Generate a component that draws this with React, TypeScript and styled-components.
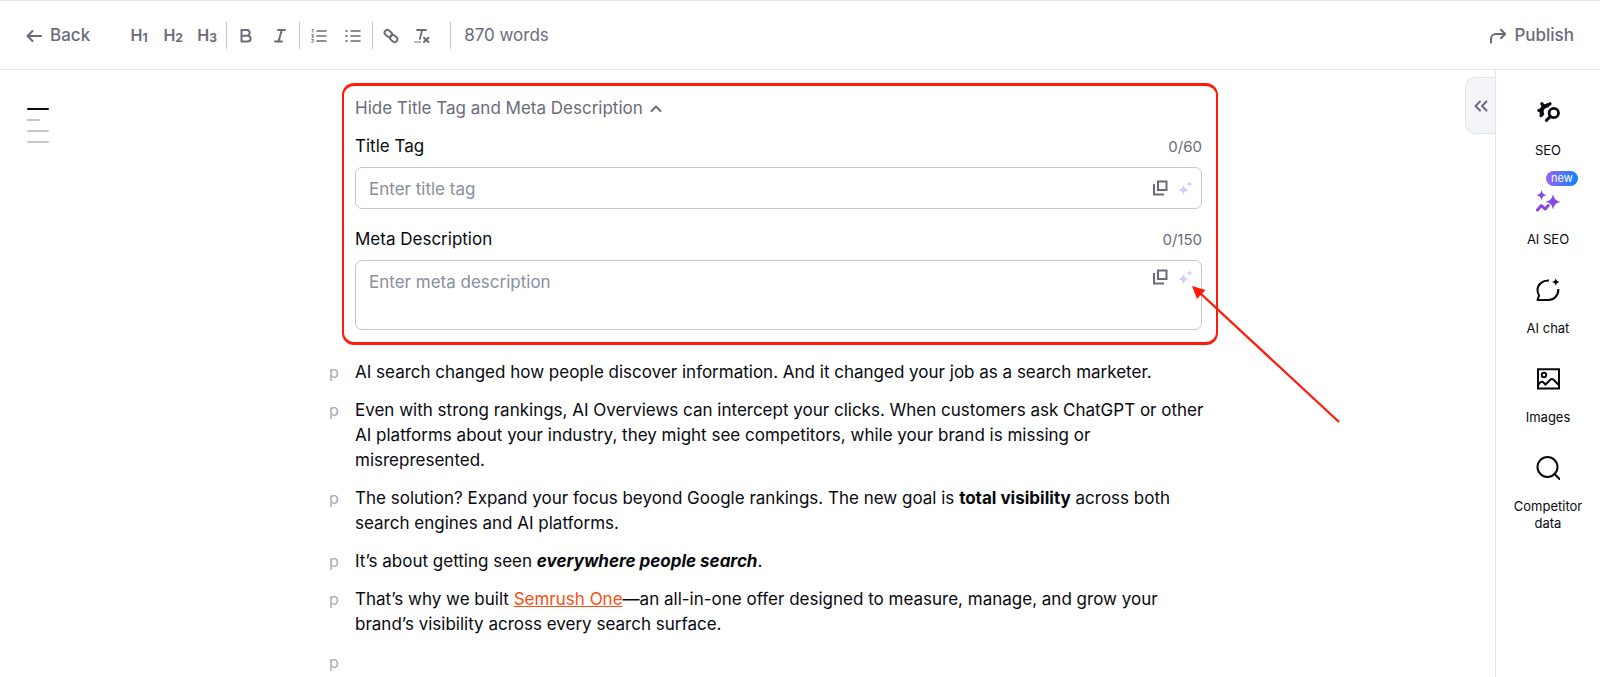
import React from "react";
import styled, { createGlobalStyle } from "styled-components";

const ink = "#08090f";
const muted = "#6a6b7a";
const line = "#e3e4ea";
const control = "#c4c6d2";
const annotation = "#ff1a0a";

const GlobalStyle = createGlobalStyle`
  * { box-sizing: border-box; }
  html, body { margin: 0; background: #fff; }
  body {
    font-family: Inter, "Liberation Sans", sans-serif;
    font-size: 17px;
    line-height: 25px;
    color: ${ink};
  }
  button, input, textarea { font: inherit; color: inherit; }
  button { border: 0; padding: 0; background: none; cursor: pointer; }
  svg { display: block; flex: none; }
`;

const Page = styled.div`
  display: flex;
  flex-direction: column;
  height: 100vh;
  overflow: hidden;
  border-top: 1px solid ${line};
`;

const Toolbar = styled.header`
  display: flex;
  align-items: center;
  flex: none;
  height: 69px;
  padding: 1px 26px 0;
  border-bottom: 1px solid ${line};
  color: ${muted};
`;

const NavButton = styled.button`
  display: flex;
  align-items: center;
  gap: 8px;
  font-weight: 500;
`;

const Tools = styled.div`
  display: flex;
  align-items: center;
  margin-left: 32px;
`;

const ToolButton = styled.button<{ $narrow?: boolean }>`
  display: flex;
  align-items: center;
  justify-content: center;
  width: ${(p) => (p.$narrow ? 31 : 34)}px;
  height: 28px;
  font-size: 16px;
  font-weight: 600;
`;

const Level = styled.span`
  padding-top: 3px;
  font-size: 12px;
  font-weight: 700;
`;

const Divider = styled.span<{ $wide?: boolean }>`
  width: 1px;
  height: 27px;
  margin: 0 ${(p) => (p.$wide ? 13 : 2)}px;
  background: ${control};
`;

const Words = styled.span`
  margin-right: auto;
`;

const Body = styled.div`
  display: flex;
  flex: 1;
  min-height: 0;
`;

const Outline = styled.nav`
  display: flex;
  flex-direction: column;
  gap: 9px;
  width: 82px;
  padding: 38px 0 0 27px;
`;

const OutlineMark = styled.a<{ $short?: boolean; $active?: boolean }>`
  width: ${(p) => (p.$short ? 13 : 22)}px;
  height: 2px;
  border-radius: 1px;
  background: ${(p) => (p.$active ? ink : control)};
`;

const Editor = styled.main`
  flex: 1;
  min-width: 0;
`;

const Article = styled.div`
  display: flex;
  flex-direction: column;
  gap: 13px;
  max-width: 889px;
  margin: 0 auto;
  padding-top: 13px;
`;

const MetaPanel = styled.section`
  position: relative;
  margin: 0 0 2px 13px;
  padding: 10px 14px 12px 11px;
  border: 2px solid ${annotation};
  border-width: 3px 2px;
  border-radius: 12px;
`;

const Toggle = styled.button`
  display: flex;
  align-items: center;
  gap: 7px;
  color: ${muted};
`;

const Field = styled.div<{ $first?: boolean }>`
  margin-top: ${(p) => (p.$first ? 13 : 18)}px;
`;

const FieldHead = styled.div`
  display: flex;
  justify-content: space-between;
  margin-bottom: 8px;
`;

const Counter = styled.span`
  font-size: 15px;
  color: ${muted};
`;

const Box = styled.div<{ $tall?: boolean }>`
  display: flex;
  align-items: ${(p) => (p.$tall ? "flex-start" : "center")};
  height: ${(p) => (p.$tall ? 70 : 42)}px;
  padding: ${(p) => (p.$tall ? 8 : 0)}px 8px 0 13px;
  border: 1px solid ${control};
  border-radius: 7px;

  input, textarea {
    flex: 1;
    min-width: 0;
    height: ${(p) => (p.$tall ? 50 : 26)}px;
    padding: 1px 0 0;
    border: 0;
    outline: 0;
    resize: none;
    background: none;
  }
  ::placeholder { color: #8a8e9e; opacity: 1; }
`;

const BoxButtons = styled.div`
  display: flex;
  gap: 9px;
  color: ${muted};
`;

const ArrowLayer = styled.svg`
  position: absolute;
  top: 199px;
  right: -127px;
  pointer-events: none;
`;

const Block = styled.div`
  display: grid;
  grid-template-columns: 26px 1fr;
  padding-right: 11px;
`;

const Tag = styled.span`
  color: #a9abb8;
  font-size: 16px;
`;

const Text = styled.p`
  margin: 0;
  min-height: 25px;
`;

const TextLink = styled.a`
  color: #ff4d12;
  text-decoration: underline;
`;

const CollapseTab = styled.button`
  display: flex;
  align-items: center;
  justify-content: center;
  width: 30px;
  height: 57px;
  margin-top: 7px;
  border: 1px solid ${line};
  border-right: 0;
  border-radius: 10px 0 0 10px;
  background: #f4f5f9;
  color: ${muted};
`;

const Sidebar = styled.aside`
  display: flex;
  flex-direction: column;
  align-items: center;
  gap: 30px;
  width: 105px;
  padding-top: 30px;
  border-left: 1px solid ${line};
`;

const SideItem = styled.button`
  position: relative;
  display: flex;
  flex-direction: column;
  align-items: center;
  gap: 18px;
  width: 80px;
  font-size: 13px;
  line-height: 17px;
`;

const Badge = styled.span`
  position: absolute;
  top: -18px;
  left: 38px;
  padding: 0 5px;
  border-radius: 8px;
  background: linear-gradient(90deg, #9b62f2, #0a86ff);
  color: #fff;
  font-size: 11px;
  line-height: 15px;
`;

const stroke = {
  fill: "none",
  stroke: "currentColor",
  strokeWidth: 2,
  strokeLinecap: "round" as const,
  strokeLinejoin: "round" as const,
};

const CopyIcon = () => (
  <svg width="16" height="16" {...stroke} strokeLinecap="butt" strokeLinejoin="miter">
    <path d="M6 1.500h8.500V10H6z" />
    <path d="M2 4v10.500h10" />
  </svg>
);

const SparkleIcon = () => (
  <svg width="16" height="16" fill="#d9c8f7">
    <path d="M6.500 5c.8 3 1.800 4 5 5-3.200 1-4.200 2-5 5-.8-3-1.800-4-5-5 3.200-1 4.200-2 5-5z" />
    <path d="M12.500 1c.4 1.900 1 2.500 3 3-2 .5-2.600 1.100-3 3-.4-1.900-1-2.500-3-3 2-.5 2.600-1.100 3-3z" />
  </svg>
);

const FieldActions = () => (
  <BoxButtons>
    <button aria-label="Copy"><CopyIcon /></button>
    <button aria-label="Generate"><SparkleIcon /></button>
  </BoxButtons>
);

const SeoIcon = () => (
  <svg width="24" height="24" {...stroke}>
    <path d="M12.500 5.300C8.500 5.500 5.500 8 5.500 11.500c0 1.500.3 2.500 1 3.700" strokeWidth="4.200" strokeLinecap="butt" />
    <path d="M5.800 3.800l1.500 2M11.800 5l2.200-1.200M2.800 10.300h2M5 15.600l1.500-1.500" strokeWidth="3.200" />
    <circle cx="17.800" cy="13" r="4.700" strokeWidth="2.800" />
    <path d="M14.200 16.600L10.400 20.400" strokeWidth="3" />
  </svg>
);

const AiSeoIcon = () => (
  <svg width="24" height="24" fill="#8649e1">
    <path d="M5.500 1c.9 3.500 1.800 4.300 5 5.200-3.200.9-4.100 1.700-5 5.200-.9-3.500-1.800-4.300-5-5.200 3.200-.9 4.100-1.700 5-5.200z" />
    <path d="M17 5c1.200 5 2.600 6.500 7.500 7.800-4.900 1.300-6.300 2.700-7.500 7.700-1.200-5-2.600-6.400-7.500-7.700 4.900-1.300 6.300-2.800 7.500-7.800z" />
    <path d="M1.500 21l3.800-4.400 4 3.400 3-3.400" fill="none" stroke="#8649e1" strokeWidth="3" strokeLinecap="round" strokeLinejoin="round" />
  </svg>
);

const ChatIcon = () => (
  <svg width="24" height="24" {...stroke}>
    <path d="M13 2.600C6.500 2.300 1.500 6.500 1.500 12c0 2 .5 3.800 1.600 5.300L1.500 22h11c5.500 0 9.900-4.300 9.900-11" strokeLinecap="butt" />
    <path d="M19.800 0c.6 2.600 1.400 3.400 4 4-2.600.6-3.400 1.400-4 4-.6-2.600-1.400-3.400-4-4 2.600-.6 3.400-1.400 4-4z" fill="currentColor" stroke="none" />
  </svg>
);

const ImageIcon = () => (
  <svg width="24" height="24" {...stroke} strokeLinejoin="miter">
    <path d="M2 2.200h21v19.300H2z" />
    <circle cx="8" cy="8" r="2.200" />
    <path d="M2.500 17.500c1.500-3 4-3.500 5.500-1.500l1.500 1.500 5-5c1-.8 1.800-.8 2.800 0l5 5" />
  </svg>
);

const SearchIcon = () => (
  <svg width="24" height="24" {...stroke}>
    <circle cx="11.500" cy="11" r="10" />
    <path d="M18.500 18l5 5" />
  </svg>
);

const SmallIcon = ({ children }: { children: React.ReactNode }) => (
  <svg width="16" height="16" {...stroke}>{children}</svg>
);

const sideItems = [
  { label: "SEO", icon: <SeoIcon /> },
  { label: "AI SEO", icon: <AiSeoIcon />, badge: "new" },
  { label: "AI chat", icon: <ChatIcon /> },
  { label: "Images", icon: <ImageIcon /> },
  { label: "Competitor data", icon: <SearchIcon /> },
];

const paragraphs: React.ReactNode[] = [
  "AI search changed how people discover information. And it changed your job as a search marketer.",
  "Even with strong rankings, AI Overviews can intercept your clicks. When customers ask ChatGPT or other AI platforms about your industry, they might see competitors, while your brand is missing or misrepresented.",
  <>The solution? Expand your focus beyond Google rankings. The new goal is <strong>total visibility</strong> across both search engines and AI platforms.</>,
  <>It’s about getting seen <strong><em>everywhere people search</em></strong>.</>,
  <>That’s why we built <TextLink href="#semrush-one">Semrush One</TextLink>—an all-in-one offer designed to measure, manage, and grow your brand’s visibility across every search surface.</>,
  null,
];

export default function App() {
  return (
    <Page>
      <GlobalStyle />
      <Toolbar>
        <NavButton>
          <SmallIcon><path d="M15 8H1.500M6.500 3L1.500 8l5 5" /></SmallIcon>
          Back
        </NavButton>
        <Tools>
          {[1, 2, 3].map((n) => (
            <ToolButton key={n} aria-label={`Heading ${n}`}>H<Level>{n}</Level></ToolButton>
          ))}
          <Divider />
          <ToolButton aria-label="Bold">
            <SmallIcon><path d="M3.500 2h5.300a2.800 2.800 0 0 1 0 5.700H3.500zM3.500 7.700h6.200a2.900 2.900 0 0 1 0 5.800H3.500z" /></SmallIcon>
          </ToolButton>
          <ToolButton aria-label="Italic">
            <SmallIcon><path d="M6 2h7M3 13.500h7M9.800 2l-3.300 11.500" /></SmallIcon>
          </ToolButton>
          <Divider />
          <ToolButton aria-label="Numbered list">
            <SmallIcon>
              <path d="M6 3h9M6 8h9M6 13h9" strokeWidth="1.600" />
              <path d="M1 1.800l1-.6v3M.8 6.800h1.700l-1.700 2.400h1.900M.8 11.600h1.800l-.8 1.200c1.300 0 1.200 1.800-1 1.500" strokeWidth="1" />
            </SmallIcon>
          </ToolButton>
          <ToolButton aria-label="Bulleted list">
            <SmallIcon>
              <path d="M6 3h9M6 8h9M6 13h9" strokeWidth="1.600" />
              <path d="M1.500 3h.2M1.500 8h.2M1.500 13h.2" />
            </SmallIcon>
          </ToolButton>
          <Divider />
          <ToolButton $narrow aria-label="Link">
            <SmallIcon>
              <rect x="-4" y="-2.700" width="8" height="5.400" rx="2.700" transform="translate(5.300 5.500) rotate(42)" />
              <rect x="-4" y="-2.700" width="8" height="5.400" rx="2.700" transform="translate(10.700 10.500) rotate(42)" />
            </SmallIcon>
          </ToolButton>
          <ToolButton $narrow aria-label="Clear formatting">
            <SmallIcon>
              <path d="M3 2h9M8.200 2L5.800 11" strokeWidth="1.800" />
              <path d="M.8 14h5.700" strokeWidth="1.200" />
              <path d="M10 9.800l4.400 4.200M14.400 9.800L10 14" />
            </SmallIcon>
          </ToolButton>
        </Tools>
        <Divider $wide />
        <Words>870 words</Words>
        <NavButton>
          <SmallIcon><path d="M1 14.500V11a5 5 0 0 1 5-5h9M11 1.800L15.200 6 11 10.200" /></SmallIcon>
          Publish
        </NavButton>
      </Toolbar>
      <Body>
        <Outline aria-label="Outline">
          <OutlineMark href="#s1" $active aria-label="Section 1" />
          <OutlineMark href="#s2" $short aria-label="Section 2" />
          <OutlineMark href="#s3" aria-label="Section 3" />
          <OutlineMark href="#s4" aria-label="Section 4" />
        </Outline>
        <Editor>
          <Article>
            <MetaPanel>
              <Toggle aria-expanded="true">
                Hide Title Tag and Meta Description
                <svg width="12" height="12" {...stroke}><path d="M1.500 8L6 3.500 10.500 8" /></svg>
              </Toggle>
              <Field $first>
                <FieldHead>
                  <label htmlFor="title-tag">Title Tag</label>
                  <Counter>0/60</Counter>
                </FieldHead>
                <Box>
                  <input id="title-tag" placeholder="Enter title tag" />
                  <FieldActions />
                </Box>
              </Field>
              <Field>
                <FieldHead>
                  <label htmlFor="meta-description">Meta Description</label>
                  <Counter>0/150</Counter>
                </FieldHead>
                <Box $tall>
                  <textarea id="meta-description" placeholder="Enter meta description" />
                  <FieldActions />
                </Box>
              </Field>
              <ArrowLayer width="151" height="140" aria-hidden="true">
                <path d="M8 8L147 137" stroke={annotation} strokeWidth="2.300" />
                <path d="M0 1l13.500 4L5 14z" fill={annotation} />
              </ArrowLayer>
            </MetaPanel>
            {paragraphs.map((content, i) => (
              <Block key={i}>
                <Tag>p</Tag>
                <Text>{content}</Text>
              </Block>
            ))}
          </Article>
        </Editor>
        <CollapseTab aria-label="Expand panel">
          <svg width="14" height="12" {...stroke}><path d="M6 1.500L1.500 6 6 10.500M12.500 1.500L8 6l4.500 4.500" /></svg>
        </CollapseTab>
        <Sidebar>
          {sideItems.map((item) => (
            <SideItem key={item.label}>
              {item.icon}
              {item.badge && <Badge>{item.badge}</Badge>}
              <span>{item.label}</span>
            </SideItem>
          ))}
        </Sidebar>
      </Body>
    </Page>
  );
}
